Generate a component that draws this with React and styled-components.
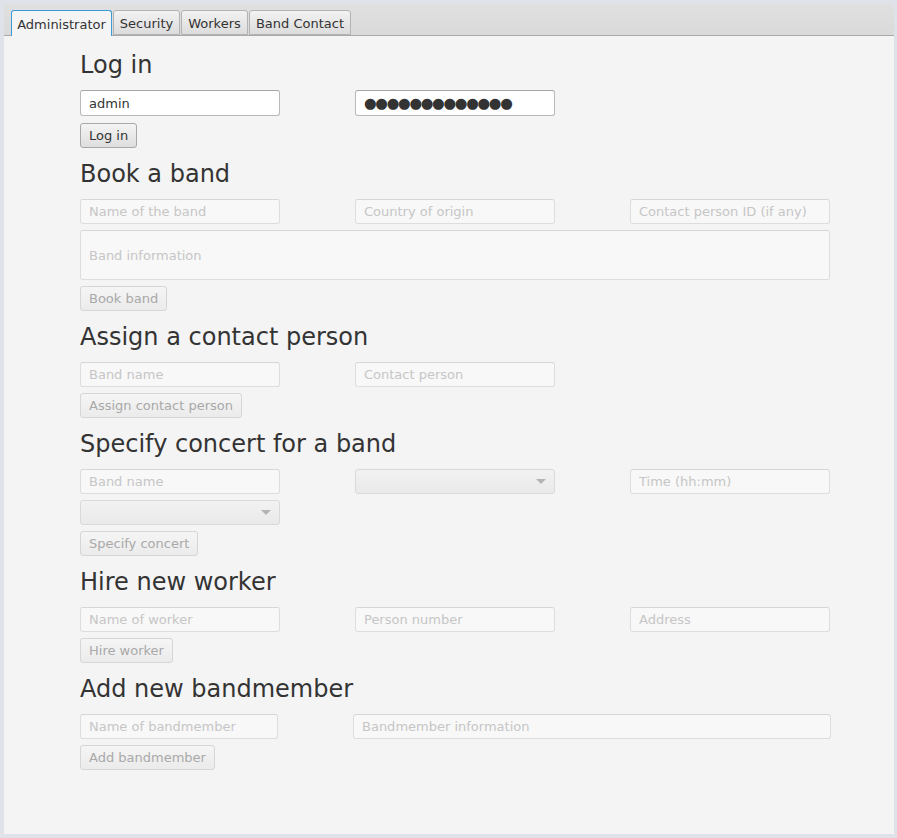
import React from "react";
import styled, { createGlobalStyle } from "styled-components";

const Global = createGlobalStyle`
  html, body { margin: 0; padding: 0; background: #dfe2e8; }
  body { font-family: "DejaVu Sans", "Liberation Sans", sans-serif; }
  * { box-sizing: border-box; }
`;

const Window = styled.div`
  margin: 4px 0 0 4px;
  width: 890px;
  height: 830px;
  background: #f4f4f4;
  display: flex;
  flex-direction: column;
`;

const TabBar = styled.div`
  height: 32px;
  background: linear-gradient(#e0e0e0, #dadada);
  border-bottom: 1px solid #a9a9a9;
  display: flex;
  align-items: flex-end;
  gap: 1px;
  padding-left: 7px;
`;

const Tab = styled.div`
  width: ${(p) => p.$w}px;
  height: ${(p) => (p.$active ? "26px" : "25px")};
  margin-bottom: ${(p) => (p.$active ? "-1px" : "0")};
  padding-top: 1px;
  display: flex;
  align-items: center;
  justify-content: center;
  white-space: nowrap;
  font-size: 13px;
  color: #333;
  border-radius: 3px 3px 0 0;
  border: 1px solid ${(p) => (p.$active ? "#3b9bd6" : "#b3b3b3")};
  border-bottom: ${(p) => (p.$active ? "none" : "1px solid #b3b3b3")};
  background: ${(p) =>
    p.$active ? "#f4f4f4" : "linear-gradient(#f2f2f2, #dcdcdc)"};
  box-shadow: ${(p) => (p.$active ? "inset 0 0 0 1px #f4f4f4" : "none")};
`;

const Content = styled.div`
  padding: 15px 0 0 76px;
  display: flex;
  flex-direction: column;
  gap: 12px;
`;

const Section = styled.section`
  display: flex;
  flex-direction: column;
  gap: 6px;
`;

const Heading = styled.h2`
  margin: 0 0 5px 0;
  font-size: 24px;
  line-height: 28px;
  font-weight: normal;
  color: #333;
`;

const Row = styled.div`
  display: grid;
  grid-template-columns: ${(p) => p.$cols || "200px 200px 200px"};
  column-gap: ${(p) => p.$gap || "75px"};
`;

const Field = styled.input`
  height: ${(p) => (p.$tall ? "26px" : "25px")};
  width: 100%;
  font-family: "DejaVu Sans", sans-serif;
  font-size: 13px;
  color: #333;
  padding: 0 8px;
  border-radius: 3px;
  outline: none;
  border: 1px solid ${(p) => (p.disabled ? "#dddddd" : "#b9b9b9")};
  border-top-color: ${(p) => (p.disabled ? "#d6d6d6" : "#a6a6a6")};
  background: ${(p) => (p.disabled ? "#f8f8f8" : "#ffffff")};
  &::placeholder { color: #c6c6c6; }
  &:disabled { color: #c6c6c6; }
`;

const Dots = styled(Field)`
  font-size: 14.5px;
  letter-spacing: -1.3px;
  padding-left: 8px;
`;

const Area = styled.textarea`
  grid-column: 1 / -1;
  height: 50px;
  resize: none;
  font-family: "DejaVu Sans", sans-serif;
  font-size: 13px;
  padding: 16px 8px;
  line-height: 17px;
  border-radius: 3px;
  border: 1px solid #dddddd;
  border-top-color: #d6d6d6;
  background: #f8f8f8;
  &::placeholder { color: #c6c6c6; }
`;

const Button = styled.button`
  align-self: flex-start;
  height: 25px;
  margin-top: ${(p) => p.$shift || "0"};
  padding: 0 8px;
  font-family: "DejaVu Sans", sans-serif;
  font-size: 13px;
  border-radius: 3px;
  color: ${(p) => (p.disabled ? "#a9a9a9" : "#333")};
  border: 1px solid ${(p) => (p.disabled ? "#d6d6d6" : "#a8a8a8")};
  background: ${(p) =>
    p.disabled
      ? "linear-gradient(#f5f5f5, #ebebeb)"
      : "linear-gradient(#f4f4f4, #dedede)"};
`;

const Combo = styled.div`
  height: 25px;
  width: 200px;
  border-radius: 3px;
  border: 1px solid #d9d9d9;
  background: linear-gradient(#f2f2f2, #e9e9e9);
  display: flex;
  align-items: center;
  justify-content: flex-end;
  padding-right: 8px;
`;

const Arrow = styled.span`
  width: 0;
  height: 0;
  border-left: 5px solid transparent;
  border-right: 5px solid transparent;
  border-top: 5px solid #b4b4b4;
`;

export default function App() {
  return (
    <>
      <Global />
      <Window>
        <TabBar>
          <Tab $active $w={101}>Administrator</Tab>
          <Tab $w={67}>Security</Tab>
          <Tab $w={67}>Workers</Tab>
          <Tab $w={102}>Band Contact</Tab>
        </TabBar>
        <Content>
          <Section>
            <Heading>Log in</Heading>
            <Row>
              <Field $tall defaultValue="admin" />
              <Dots $tall defaultValue={"●".repeat(13)} />
            </Row>
            <Button $shift="1px">Log in</Button>
          </Section>

          <Section>
            <Heading>Book a band</Heading>
            <Row>
              <Field disabled placeholder="Name of the band" />
              <Field disabled placeholder="Country of origin" />
              <Field disabled placeholder="Contact person ID (if any)" />
            </Row>
            <Row>
              <Area disabled placeholder="Band information" />
            </Row>
            <Button disabled>Book band</Button>
          </Section>

          <Section>
            <Heading>Assign a contact person</Heading>
            <Row>
              <Field disabled placeholder="Band name" />
              <Field disabled placeholder="Contact person" />
            </Row>
            <Button disabled>Assign contact person</Button>
          </Section>

          <Section>
            <Heading>Specify concert for a band</Heading>
            <Row>
              <Field disabled placeholder="Band name" />
              <Combo><Arrow /></Combo>
              <Field disabled placeholder="Time (hh:mm)" />
            </Row>
            <Row>
              <Combo><Arrow /></Combo>
            </Row>
            <Button disabled>Specify concert</Button>
          </Section>

          <Section>
            <Heading>Hire new worker</Heading>
            <Row>
              <Field disabled placeholder="Name of worker" />
              <Field disabled placeholder="Person number" />
              <Field disabled placeholder="Address" />
            </Row>
            <Button disabled>Hire worker</Button>
          </Section>

          <Section>
            <Heading>Add new bandmember</Heading>
            <Row $cols="198px 478px" $gap="75px">
              <Field disabled placeholder="Name of bandmember" />
              <Field disabled placeholder="Bandmember information" />
            </Row>
            <Button disabled>Add bandmember</Button>
          </Section>
        </Content>
      </Window>
    </>
  );
}
